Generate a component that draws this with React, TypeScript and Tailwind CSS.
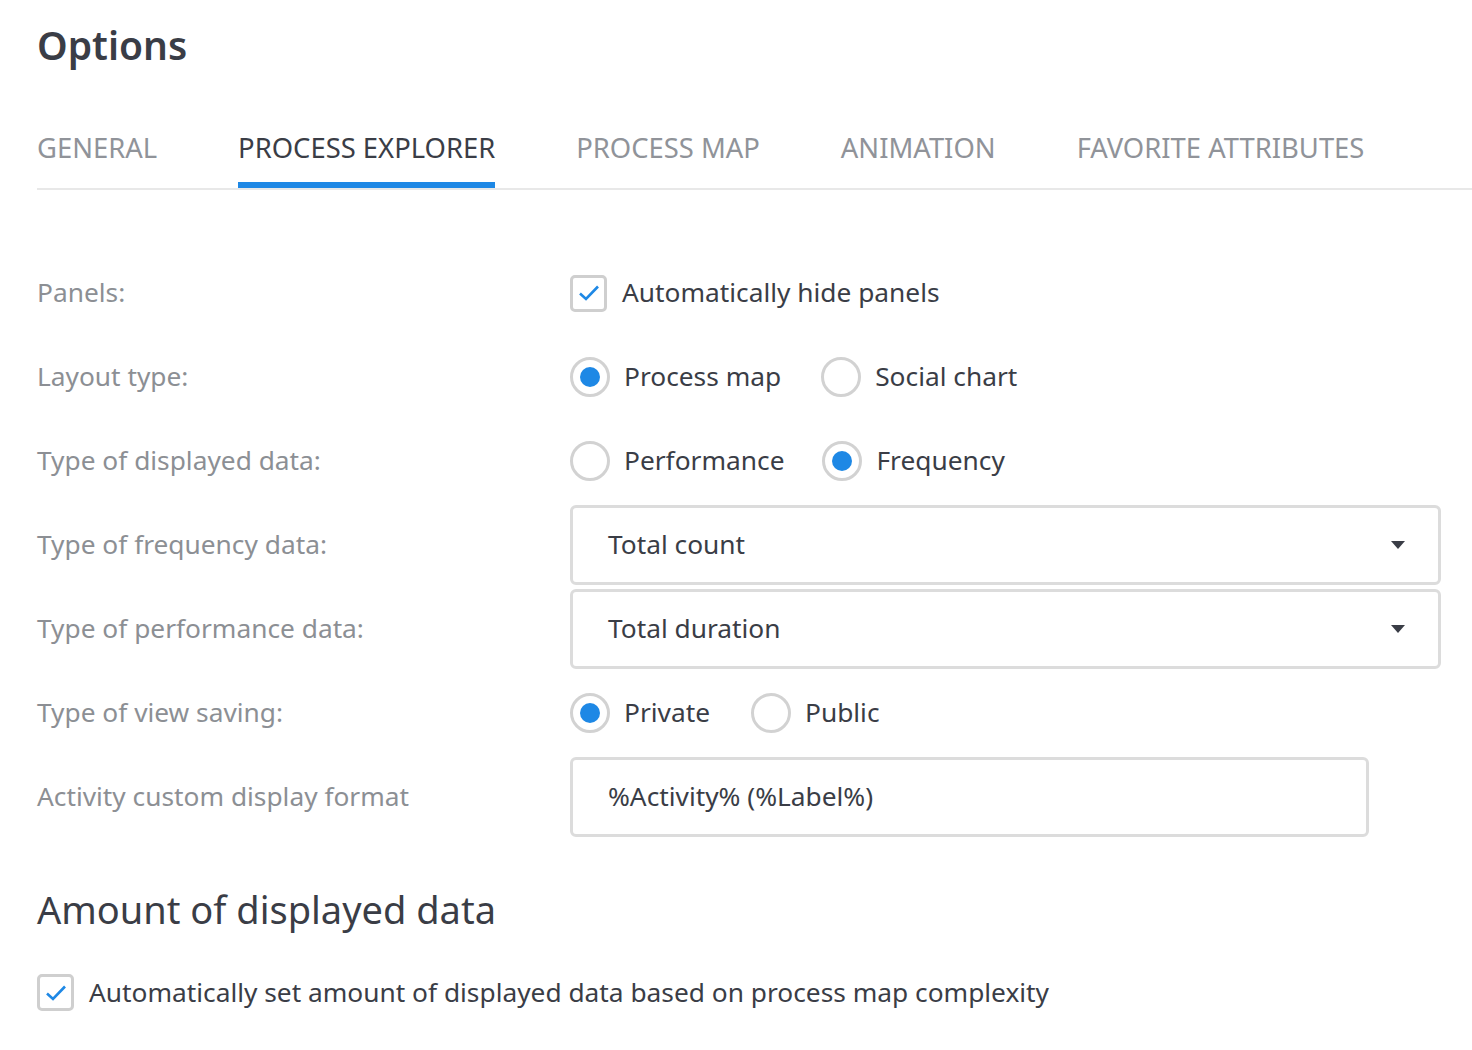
import React, { useState } from 'react';

const font = { fontFamily: '"Noto Sans", "Open Sans", sans-serif' };

const tabs = ['GENERAL', 'PROCESS EXPLORER', 'PROCESS MAP', 'ANIMATION', 'FAVORITE ATTRIBUTES'];

const Checkbox: React.FC<{ checked: boolean }> = ({ checked }) => (
  <span className="w-[37px] h-[37px] shrink-0 rounded-[5px] border-[3px] border-[#cfcfcf] bg-white flex items-center justify-center">
    {checked && (
      <svg width="22" height="18" viewBox="0 0 22 18" fill="none">
        <path d="M2 9.5 L8 15 L20 2.5" stroke="#1e88e5" strokeWidth="2.6" />
      </svg>
    )}
  </span>
);

const Radio: React.FC<{ checked: boolean; label: string }> = ({ checked, label }) => (
  <label className="flex items-center gap-[14px] cursor-pointer">
    <span className="w-[40px] h-[40px] shrink-0 rounded-full border-[3px] border-[#d2d2d2] bg-white flex items-center justify-center">
      {checked && <span className="w-[20px] h-[20px] rounded-full bg-[#1e88e5]" />}
    </span>
    <span className="text-[26.3px] text-[#3a3d46]">{label}</span>
  </label>
);

const Row: React.FC<{ label: string; children: React.ReactNode }> = ({ label, children }) => (
  <div className="flex items-center h-[84px]">
    <div className="w-[533px] shrink-0 text-[26.3px] text-[#8c8f94]">{label}</div>
    <div className="flex-1 flex items-center">{children}</div>
  </div>
);

const Select: React.FC<{ value: string }> = ({ value }) => (
  <div className="w-[871px] h-[80px] rounded-[6px] border-[3px] border-[#dcdcdc] bg-white flex items-center justify-between pl-[35px] pr-[33px]">
    <span className="text-[26.3px] text-[#3a3d46]">{value}</span>
    <svg width="14" height="8" viewBox="0 0 14 8">
      <path d="M0 0 H14 L7 8 Z" fill="#3a3d46" />
    </svg>
  </div>
);

export default function App() {
  const [active] = useState(1);
  return (
    <div className="min-h-screen bg-white pl-[37px] pt-[15px]" style={font}>
      <h1 className="text-[39px] font-semibold text-[#3a3d46] leading-[60px]">Options</h1>

      <div className="mt-[52px] flex gap-[81px] border-b-2 border-[#e8e8e8]">
        {tabs.map((t, i) => (
          <div
            key={t}
            className={`pb-[14px] text-[27.4px] border-b-[6px] ${
              i === active ? 'text-[#3a3d46] border-[#1e88e5]' : 'text-[#909399] border-transparent'
            }`}
          >
            {t}
          </div>
        ))}
      </div>

      <div className="mt-[61px]">
        <Row label="Panels:">
          <label className="flex items-center gap-[15px]">
            <Checkbox checked />
            <span className="text-[26.3px] text-[#3a3d46]">Automatically hide panels</span>
          </label>
        </Row>
        <Row label="Layout type:">
          <div className="flex items-center gap-[40px]">
            <Radio checked label="Process map" />
            <Radio checked={false} label="Social chart" />
          </div>
        </Row>
        <Row label="Type of displayed data:">
          <div className="flex items-center gap-[38px]">
            <Radio checked={false} label="Performance" />
            <Radio checked label="Frequency" />
          </div>
        </Row>
        <Row label="Type of frequency data:">
          <Select value="Total count" />
        </Row>
        <Row label="Type of performance data:">
          <Select value="Total duration" />
        </Row>
        <Row label="Type of view saving:">
          <div className="flex items-center gap-[41px]">
            <Radio checked label="Private" />
            <Radio checked={false} label="Public" />
          </div>
        </Row>
        <Row label="Activity custom display format">
          <div className="w-[799px] h-[80px] rounded-[6px] border-[3px] border-[#dcdcdc] bg-white flex items-center pl-[35px]">
            <span className="text-[26.3px] text-[#3a3d46]">%Activity% (%Label%)</span>
          </div>
        </Row>
      </div>

      <h2 className="mt-[42px] text-[38px] text-[#3a3d46] leading-[56px]">Amount of displayed data</h2>

      <label className="mt-[36px] flex items-center gap-[15px]">
        <Checkbox checked />
        <span className="text-[26.3px] text-[#3a3d46]">
          Automatically set amount of displayed data based on process map complexity
        </span>
      </label>
    </div>
  );
}
